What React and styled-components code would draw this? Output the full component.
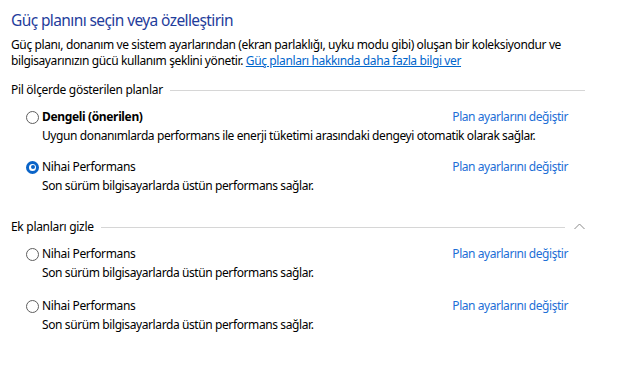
import React from "react";
import styled, { createGlobalStyle } from "styled-components";

const Global = createGlobalStyle`
  html, body { margin: 0; padding: 0; background: #ffffff; }
  body {
    font-family: "Noto Sans", "Open Sans", sans-serif;
    font-size: 12px;
    color: #000;
    -webkit-font-smoothing: antialiased;
  }
`;

const Page = styled.div`
  width: 628px;
  height: 366px;
  box-sizing: border-box;
  padding: 10px 43px 0 11px;
  background: #fff;
`;

const Title = styled.h1`
  margin: 0;
  font-size: 15.5px;
  font-weight: 400;
  line-height: 20px;
  letter-spacing: -0.6px;
  color: #1f3d9c;
`;

const Intro = styled.p`
  margin: 7px 0 0 0;
  font-size: 12px;
  line-height: 16px;
  letter-spacing: -0.38px;
`;

const Link = styled.a`
  color: #0066cc;
  text-decoration: underline;
  cursor: pointer;
`;

const Section = styled.section`
  margin-top: ${(p) => p.$top}px;
`;

const SectionHeader = styled.div`
  display: flex;
  align-items: center;
  gap: 7px;
  height: 16px;
  line-height: 16px;
  font-size: 12px;
  letter-spacing: -0.3px;
`;

const Rule = styled.div`
  flex: 1;
  height: 1px;
  background: #d6d6d6;
  margin-right: ${(p) => p.$gap || 0}px;
`;

const Chevron = styled.svg`
  display: block;
  width: 11px;
  height: 7px;
  margin-top: -2px;
`;

const PlanList = styled.div`
  display: flex;
  flex-direction: column;
  padding: 0 17px 0 15px;
`;

const Plan = styled.div`
  margin-top: ${(p) => p.$top}px;
`;

const PlanRow = styled.div`
  display: flex;
  align-items: center;
  justify-content: space-between;
  height: 16px;
`;

const RadioLabel = styled.label`
  display: flex;
  align-items: center;
  gap: 3px;
  font-size: 12px;
  line-height: 16px;
  letter-spacing: -0.35px;
  font-weight: ${(p) => (p.$bold ? 700 : 400)};
`;

const Radio = styled.span`
  position: relative;
  display: block;
  width: 13px;
  height: 13px;
  box-sizing: border-box;
  border-radius: 50%;
  border: ${(p) => (p.$checked ? "3px solid #0a64c8" : "1px solid #5e5e5e")};
  background: #fff;
  &::after {
    content: "";
    display: ${(p) => (p.$checked ? "block" : "none")};
    position: absolute;
    left: 50%;
    top: 50%;
    width: 4px;
    height: 4px;
    margin: -2px 0 0 -2px;
    border-radius: 50%;
    background: #0a64c8;
  }
`;

const PlanLink = styled.a`
  color: #1d6fd6;
  font-size: 12px;
  line-height: 16px;
  letter-spacing: -0.45px;
  cursor: pointer;
`;

const Desc = styled.div`
  padding-left: 16px;
  margin-top: 3px;
  font-size: 12px;
  line-height: 16px;
  letter-spacing: -0.4px;
`;

function PlanItem({ name, desc, checked, bold, top }) {
  return (
    <Plan $top={top}>
      <PlanRow>
        <RadioLabel $bold={bold}>
          <Radio $checked={checked} />
          {name}
        </RadioLabel>
        <PlanLink>Plan ayarlarını değiştir</PlanLink>
      </PlanRow>
      <Desc>{desc}</Desc>
    </Plan>
  );
}

export default function App() {
  const perf = "Son sürüm bilgisayarlarda üstün performans sağlar.";
  return (
    <Page>
      <Global />
      <Title>Güç planını seçin veya özelleştirin</Title>
      <Intro>
        Güç planı, donanım ve sistem ayarlarından (ekran parlaklığı, uyku modu gibi) oluşan bir koleksiyondur ve
        <br />
        bilgisayarınızın gücü kullanım şeklini yönetir.{" "}
        <Link>Güç planları hakkında daha fazla bilgi ver</Link>
      </Intro>
      <Section $top={13}>
        <SectionHeader>
          Pil ölçerde gösterilen planlar
          <Rule />
        </SectionHeader>
        <PlanList>
          <PlanItem
            top={11}
            bold
            name="Dengeli (önerilen)"
            desc="Uygun donanımlarda performans ile enerji tüketimi arasındaki dengeyi otomatik olarak sağlar."
          />
          <PlanItem top={15} checked name="Nihai Performans" desc={perf} />
        </PlanList>
      </Section>
      <Section $top={25}>
        <SectionHeader>
          Ek planları gizle
          <Rule $gap={2} />
          <Chevron viewBox="0 0 11 7">
            <path d="M0.5 6 L5.5 1 L10.5 6" fill="none" stroke="#8a8a8a" strokeWidth="1" />
          </Chevron>
        </SectionHeader>
        <PlanList>
          <PlanItem top={11} name="Nihai Performans" desc={perf} />
          <PlanItem top={17} name="Nihai Performans" desc={perf} />
        </PlanList>
      </Section>
    </Page>
  );
}
